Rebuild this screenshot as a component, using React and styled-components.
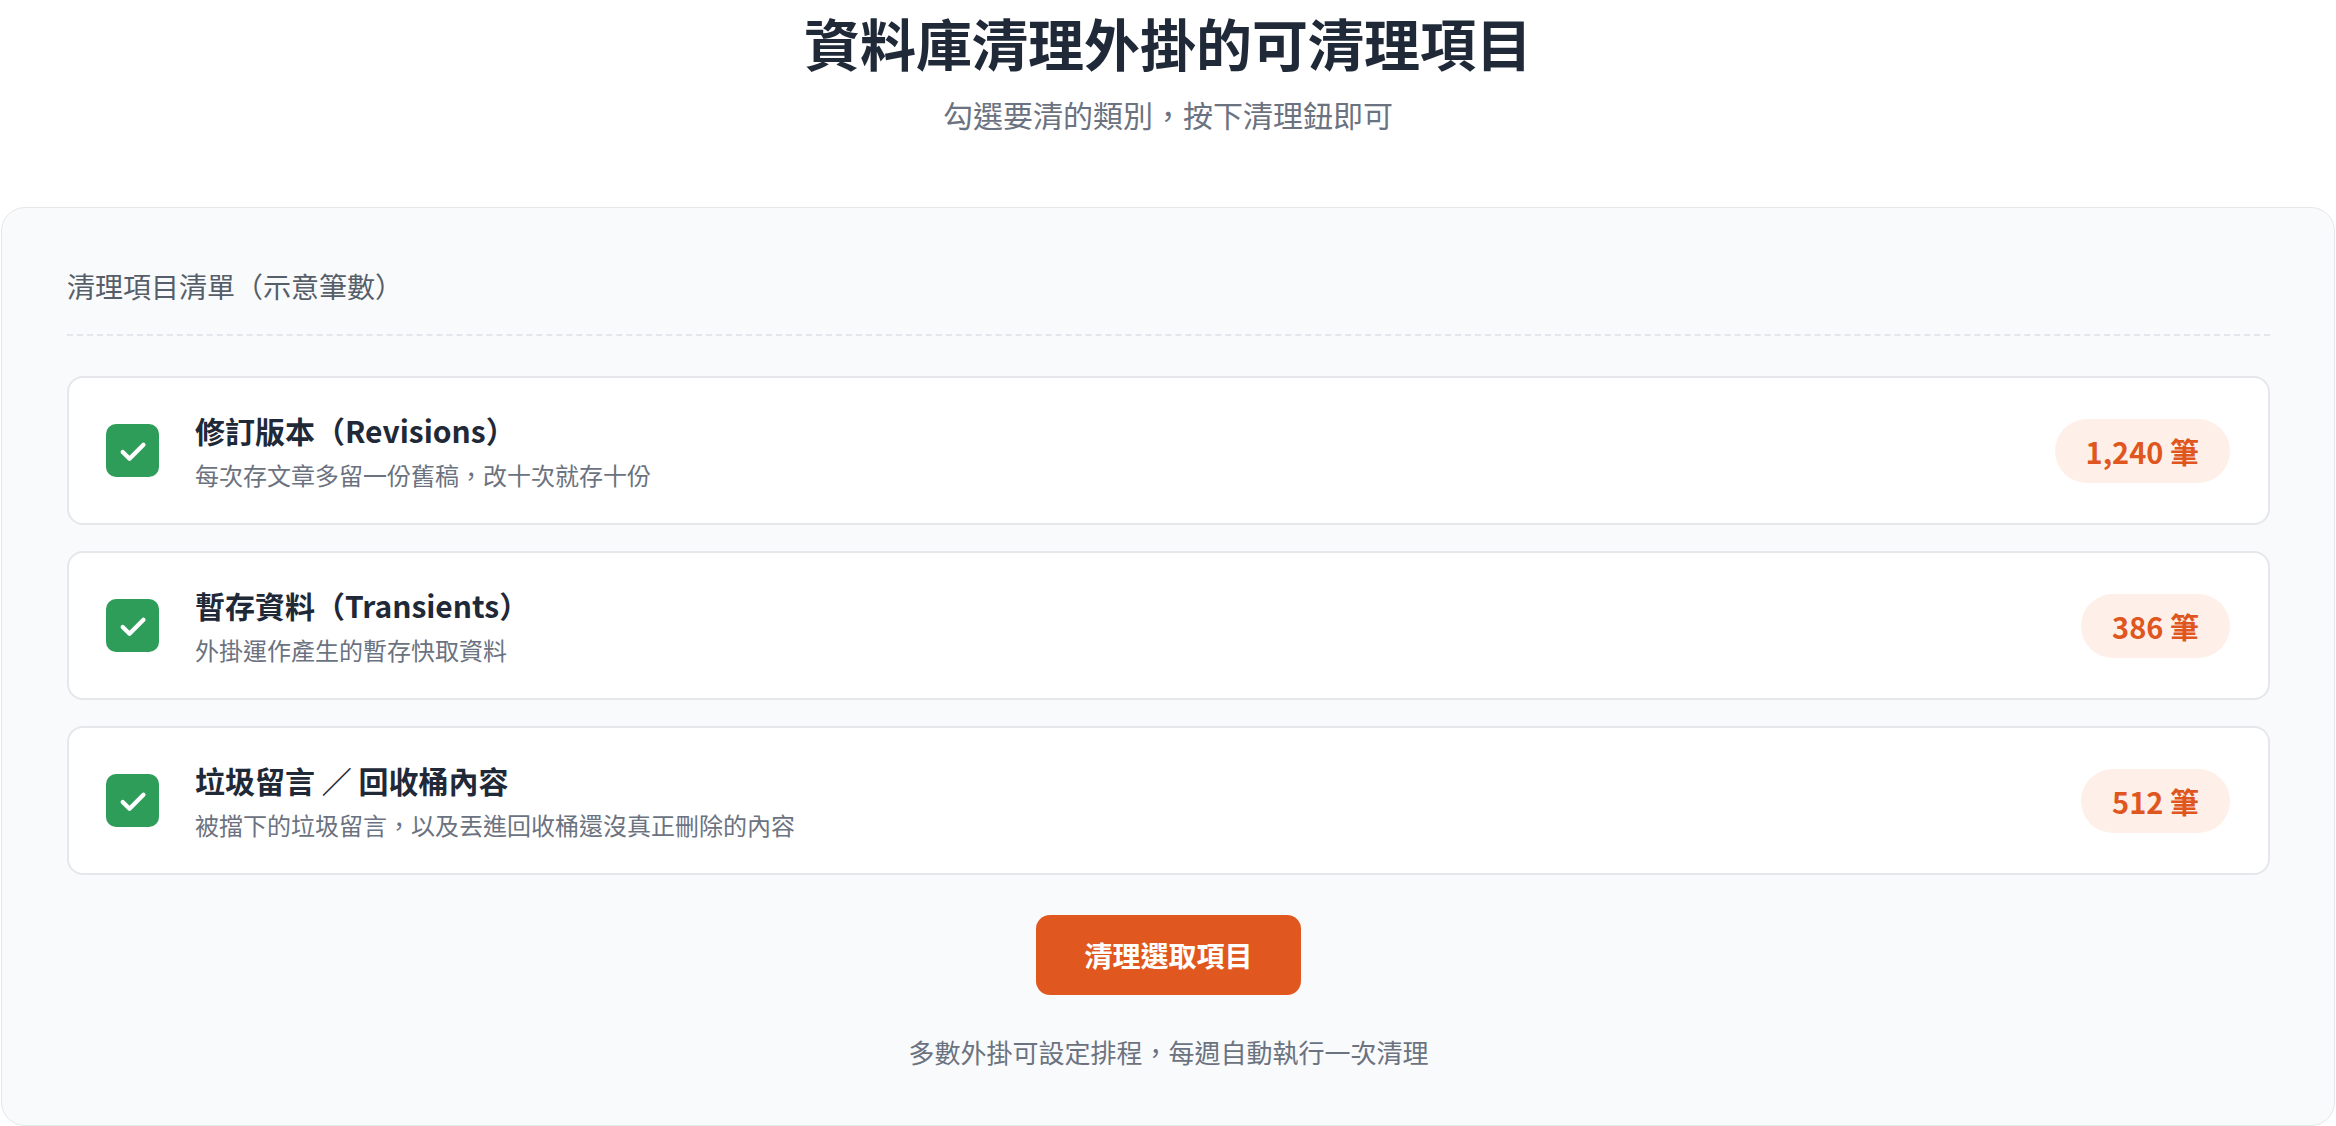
import React from 'react';
import styled, { createGlobalStyle } from 'styled-components';

const GlobalStyle = createGlobalStyle`
  html, body {
    margin: 0;
    padding: 0;
    background: #ffffff;
  }
  body {
    font-family: "Noto Sans CJK TC", "Noto Sans", sans-serif;
  }
`;

const Page = styled.div`
  padding: 8px 1px 2px;
`;

const Header = styled.header`
  display: flex;
  flex-direction: column;
  align-items: center;
  margin-bottom: 70px;
`;

const Title = styled.h1`
  margin: 0;
  font-size: 56px;
  line-height: 68px;
  font-weight: 700;
  color: #1f2937;
`;

const Subtitle = styled.p`
  margin: 16px 0 0;
  font-size: 30px;
  line-height: 45px;
  color: #6b7280;
`;

const Panel = styled.section`
  border: 1px solid #e5e7eb;
  border-radius: 24px;
  background: #f9fafb;
  padding: 57px 64px 54px 65px;
`;

const PanelHeading = styled.h2`
  margin: 0;
  padding-bottom: 27px;
  border-bottom: 2px dashed #e3e6ea;
  font-size: 28px;
  line-height: 42px;
  font-weight: 400;
  color: #565e6a;
`;

const List = styled.div`
  display: flex;
  flex-direction: column;
  gap: 26px;
  margin-top: 40px;
`;

const Card = styled.label`
  display: flex;
  align-items: center;
  height: 149px;
  box-sizing: border-box;
  padding: 0 38px 0 37px;
  background: #ffffff;
  border: 2px solid #e5e7eb;
  border-radius: 16px;
  cursor: pointer;
`;

const Check = styled.span`
  flex: none;
  display: flex;
  align-items: center;
  justify-content: center;
  width: 53px;
  height: 53px;
  border-radius: 10px;
  background: ${p => (p.$on ? '#2e9d5a' : '#ffffff')};
  border: ${p => (p.$on ? 'none' : '2px solid #d1d5db')};
`;

const ItemText = styled.div`
  flex: 1;
  display: flex;
  flex-direction: column;
  margin-left: 36px;
`;

const ItemTitle = styled.div`
  font-size: 30px;
  line-height: 42px;
  font-weight: 700;
  color: #1f2937;
`;

const ItemDesc = styled.div`
  margin-top: 7px;
  font-size: 24px;
  line-height: 34px;
  color: #6b7280;
`;

const Badge = styled.span`
  flex: none;
  padding: 12px 31px;
  border-radius: 999px;
  background: #fef0e8;
  color: #e0561f;
  font-size: 29px;
  line-height: 40px;
  font-weight: 700;
`;

const Actions = styled.div`
  display: flex;
  flex-direction: column;
  align-items: center;
  margin-top: 40px;
`;

const CleanButton = styled.button`
  border: none;
  border-radius: 14px;
  background: #e0581f;
  color: #ffffff;
  font-family: inherit;
  font-size: 28px;
  line-height: 40px;
  font-weight: 700;
  padding: 20px 48px;
  cursor: pointer;
`;

const Note = styled.p`
  margin: 37px 0 0;
  font-size: 26px;
  line-height: 39px;
  color: #6b7280;
`;

const items = [
  {
    title: '修訂版本（Revisions）',
    desc: '每次存文章多留一份舊稿，改十次就存十份',
    count: '1,240 筆',
  },
  {
    title: '暫存資料（Transients）',
    desc: '外掛運作產生的暫存快取資料',
    count: '386 筆',
  },
  {
    title: '垃圾留言 ／ 回收桶內容',
    desc: '被擋下的垃圾留言，以及丟進回收桶還沒真正刪除的內容',
    count: '512 筆',
  },
];

function CheckMark() {
  return (
    <svg width="38" height="38" viewBox="0 0 24 24" fill="none">
      <path d="M5.5 12.6l4.3 4.3L18.6 8" stroke="#ffffff" strokeWidth="2.7" strokeLinecap="round" strokeLinejoin="round" />
    </svg>
  );
}

export default function App() {
  return (
    <Page>
      <GlobalStyle />
      <Header>
        <Title>資料庫清理外掛的可清理項目</Title>
        <Subtitle>勾選要清的類別，按下清理鈕即可</Subtitle>
      </Header>
      <Panel>
        <PanelHeading>清理項目清單（示意筆數）</PanelHeading>
        <List>
          {items.map(item => (
            <Card key={item.title}>
              <Check $on>
                <CheckMark />
              </Check>
              <ItemText>
                <ItemTitle>{item.title}</ItemTitle>
                <ItemDesc>{item.desc}</ItemDesc>
              </ItemText>
              <Badge>{item.count}</Badge>
            </Card>
          ))}
        </List>
        <Actions>
          <CleanButton>清理選取項目</CleanButton>
          <Note>多數外掛可設定排程，每週自動執行一次清理</Note>
        </Actions>
      </Panel>
    </Page>
  );
}
